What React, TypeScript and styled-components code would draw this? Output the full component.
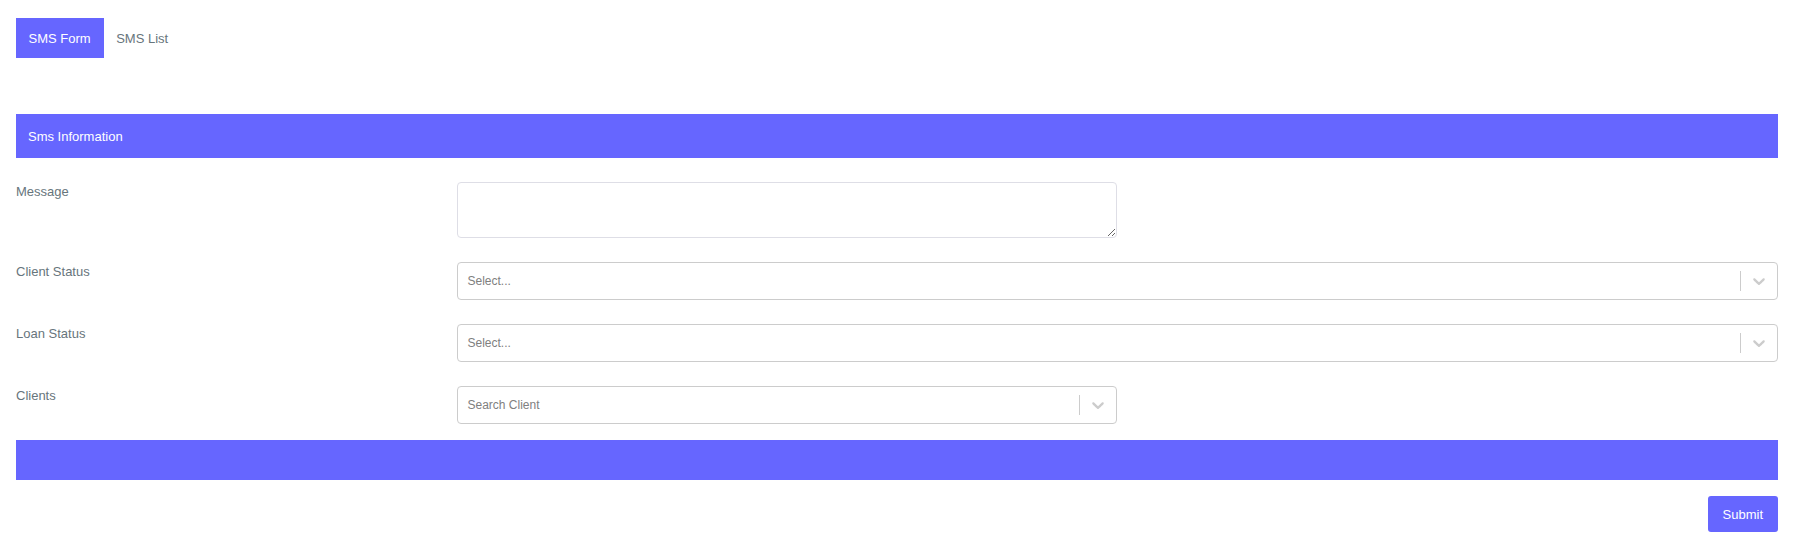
import React from "react";
import styled, { createGlobalStyle } from "styled-components";

const Global = createGlobalStyle`
  html, body { margin: 0; padding: 0; background: #fff; }
  body { font-family: "Liberation Sans", Arial, sans-serif; font-size: 13px; }
  * { box-sizing: border-box; }
`;

const PURPLE = "#6666ff";

const Page = styled.div`
  padding: 18px 15px 14px 16px;
`;

const Tabs = styled.nav`
  display: flex;
  height: 40px;
`;

const Tab = styled.button<{ $active?: boolean }>`
  height: 40px;
  padding: 0 13px 0 12.5px;
  border: none;
  border-radius: 0;
  margin: 0;
  font-family: inherit;
  font-size: 13px;
  background: ${(p) => (p.$active ? PURPLE : "transparent")};
  color: ${(p) => (p.$active ? "#fff" : "#67757c")};
  cursor: pointer;
  display: flex;
  align-items: center;
`;

const Card = styled.section`
  margin-top: 56px;
`;

const CardHeader = styled.div`
  height: 44px;
  background: ${PURPLE};
  color: #fff;
  font-size: 13px;
  padding: 0 12px;
  display: flex;
  align-items: center;
`;

const CardBody = styled.div`
  padding: 24px 0 16px;
  display: flex;
  flex-direction: column;
  gap: 24px;
`;

const Row = styled.div`
  display: flex;
  align-items: flex-start;
`;

const Label = styled.label`
  flex: 0 0 25%;
  color: #67757c;
  font-size: 13px;
  line-height: 19.5px;
`;

const Field = styled.div`
  flex: 1 1 auto;
  display: flex;
`;

const Half = styled.div`
  width: 50%;
`;

const TextArea = styled.textarea`
  display: block;
  width: 100%;
  height: 56px;
  border: 1px solid #dedee6;
  border-radius: 4px;
  font-family: inherit;
  font-size: 13px;
  padding: 6px 10px;
  outline: none;
  resize: vertical;
`;

const SelectBox = styled.div`
  width: 100%;
  height: 38px;
  border: 1px solid #cccccc;
  border-radius: 4px;
  display: flex;
  align-items: center;
  background: #fff;
`;

const Placeholder = styled.div`
  flex: 1 1 auto;
  padding: 2px 8px;
  font-size: 12px;
  color: #808080;
  span { margin-left: 2px; }
`;

const Separator = styled.span`
  align-self: stretch;
  width: 1px;
  margin: 8px 0;
  background: #cccccc;
`;

const Indicator = styled.div`
  padding: 8px;
  display: flex;
  color: #cccccc;
`;

const FooterBar = styled.div`
  height: 40px;
  background: ${PURPLE};
`;

const Actions = styled.div`
  display: flex;
  justify-content: flex-end;
  padding-top: 16px;
`;

const SubmitButton = styled.button`
  height: 36px;
  padding: 0 15px;
  border: none;
  border-radius: 3px;
  background: ${PURPLE};
  color: #fff;
  font-family: inherit;
  font-size: 13px;
  cursor: pointer;
`;

const Chevron = () => (
  <svg width="20" height="20" viewBox="0 0 20 20" fill="currentColor" aria-hidden="true">
    <path d="M4.516 7.548c0.436-0.446 1.043-0.481 1.576 0l3.908 3.747 3.908-3.747c0.533-0.481 1.141-0.446 1.574 0 0.436 0.445 0.408 1.197 0 1.615-0.406 0.418-4.695 4.502-4.695 4.502-0.217 0.223-0.502 0.335-0.787 0.335s-0.57-0.112-0.789-0.335c0 0-4.287-4.084-4.695-4.502s-0.436-1.17 0-1.615z" />
  </svg>
);

const Select = ({ placeholder }: { placeholder: string }) => (
  <SelectBox>
    <Placeholder>
      <span>{placeholder}</span>
    </Placeholder>
    <Separator />
    <Indicator>
      <Chevron />
    </Indicator>
  </SelectBox>
);

export default function App() {
  return (
    <>
      <Global />
      <Page>
        <Tabs>
          <Tab $active>SMS Form</Tab>
          <Tab>SMS List</Tab>
        </Tabs>
        <Card>
          <CardHeader>Sms Information</CardHeader>
          <CardBody>
            <Row>
              <Label>Message</Label>
              <Field>
                <Half>
                  <TextArea />
                </Half>
              </Field>
            </Row>
            <Row>
              <Label>Client Status</Label>
              <Field>
                <Select placeholder="Select..." />
              </Field>
            </Row>
            <Row>
              <Label>Loan Status</Label>
              <Field>
                <Select placeholder="Select..." />
              </Field>
            </Row>
            <Row>
              <Label>Clients</Label>
              <Field>
                <Half>
                  <Select placeholder="Search Client" />
                </Half>
              </Field>
            </Row>
          </CardBody>
          <FooterBar />
          <Actions>
            <SubmitButton>Submit</SubmitButton>
          </Actions>
        </Card>
      </Page>
    </>
  );
}
